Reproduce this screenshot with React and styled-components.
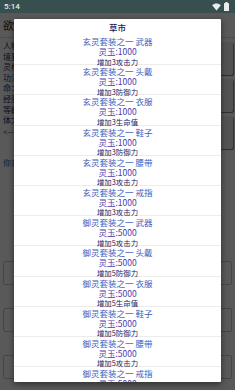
import React from "react";
import styled, { createGlobalStyle } from "styled-components";

const Global = createGlobalStyle`
  html, body { margin: 0; padding: 0; }
  body {
    width: 235px;
    height: 390px;
    overflow: hidden;
    font-family: "Noto Sans CJK SC", "Noto Sans", sans-serif;
    background: #ffffff;
  }
`;

const Page = styled.div`
  position: relative;
  width: 235px;
  height: 390px;
  overflow: hidden;
  display: flex;
  flex-direction: column;
`;

const StatusBar = styled.div`
  height: 13px;
  flex: none;
  background: #37504f;
  display: flex;
  align-items: center;
  justify-content: space-between;
  padding: 0 6px 0 4px;
  color: #e8eded;
  font-family: Roboto, "Noto Sans", sans-serif;
  font-size: 8px;
  font-weight: 500;
  position: relative;
  z-index: 3;
`;

const Icons = styled.div`
  display: flex;
  align-items: center;
  gap: 3px;
`;

const AppBody = styled.div`
  flex: 1;
  display: flex;
  flex-direction: column;
  background: #fff;
`;

const Header = styled.div`
  height: 24px;
  border-bottom: 1px solid #ddd;
  display: flex;
  align-items: center;
  padding-left: 3px;
  font-size: 11px;
  color: #3a1e14;
`;

const Main = styled.div`
  display: flex;
  gap: 4px;
  padding: 3px 2px 0 3px;
`;

const InfoCol = styled.div`
  flex: 1;
  display: flex;
  flex-direction: column;
`;

const InfoLine = styled.div`
  font-size: 8px;
  line-height: 10.6px;
  color: ${(p) => p.$color || "#1c2a6e"};
  margin-top: ${(p) => p.$gap || 0}px;
  white-space: nowrap;
`;

const ButtonCol = styled.div`
  width: 70px;
  display: flex;
  flex-direction: column;
  gap: 4px;
  padding-top: 1px;
`;

const SideButton = styled.div`
  height: ${(p) => p.$h}px;
  background: #eeeeee;
  border-radius: 2px;
  box-shadow: 1px 1px 1px rgba(0, 0, 0, 0.5);
`;

const WideBoxes = styled.div`
  display: flex;
  flex-direction: column;
  gap: 23px;
  padding: 92px 3px 0 3px;
`;

const WideBox = styled.div`
  height: ${(p) => p.$h}px;
  border: 1px solid #c8c8c8;
  border-radius: 2px;
`;

const Overlay = styled.div`
  position: absolute;
  left: 0;
  right: 0;
  top: 13px;
  bottom: 0;
  background: rgba(0, 0, 0, 0.65);
  z-index: 1;
`;

const Dialog = styled.div`
  position: absolute;
  left: 14px;
  top: 19px;
  width: 207px;
  height: 363px;
  background: #fff;
  border-radius: 1px;
  box-shadow: 0 2px 6px rgba(0, 0, 0, 0.5);
  z-index: 2;
  overflow: hidden;
  display: flex;
  flex-direction: column;
`;

const Title = styled.div`
  height: 16px;
  flex: none;
  line-height: 16px;
  text-align: center;
  font-size: 8.5px;
  font-weight: 500;
  color: #23235e;
`;

const List = styled.div`
  flex: 1;
  overflow: hidden;
`;

const Item = styled.div`
  box-sizing: border-box;
  height: 30.2px;
  padding-top: 1px;
  border-bottom: 1px solid #ececec;
  text-align: center;
  display: flex;
  flex-direction: column;
`;

const Name = styled.div`
  font-size: 8.5px;
  line-height: 11px;
  color: #3c5cbc;
`;

const Price = styled.div`
  font-size: 8.5px;
  line-height: 9.5px;
  color: #4c3aaa;
`;

const Effect = styled.div`
  font-size: 7.4px;
  line-height: 9px;
  color: #1e2260;
`;

const parts = [
  ["武器", "攻击力"],
  ["头戴", "防御力"],
  ["衣服", "生命值"],
  ["鞋子", "防御力"],
  ["腰带", "攻击力"],
  ["戒指", "攻击力"],
];

const items = [
  ...parts.map(([p, e]) => ({ name: `玄灵套装之一 ${p}`, price: "灵玉:1000", effect: `增加3${e}` })),
  ...parts.map(([p, e]) => ({ name: `御灵套装之一 ${p}`, price: "灵玉:5000", effect: `增加5${e}` })),
];

const info = ["人物：无名", "境界：炼气一层", "灵根：五行杂灵根", "功法：无", "命：100/100", "经验：0/100", "等级：1", "体力：100"];

function Wifi() {
  return (
    <svg width="9" height="8" viewBox="0 0 24 20">
      <path d="M12 19 L0.5 5 C7 -1 17 -1 23.5 5 Z" fill="#e8eded" />
    </svg>
  );
}

function Battery() {
  return (
    <svg width="5" height="9" viewBox="0 0 10 18">
      <rect x="3" y="0" width="4" height="2" fill="#e8eded" />
      <rect x="0" y="2" width="10" height="16" rx="1" fill="#e8eded" />
    </svg>
  );
}

export default function App() {
  return (
    <Page>
      <Global />
      <StatusBar>
        <span>5:14</span>
        <Icons>
          <Wifi />
          <Battery />
        </Icons>
      </StatusBar>
      <AppBody>
        <Header>欲修仙者，先修心</Header>
        <Main>
          <InfoCol>
            {info.map((t) => (
              <InfoLine key={t}>{t}</InfoLine>
            ))}
            <InfoLine $gap={1}>&lt;------------</InfoLine>
            <InfoLine $gap={21} $color="#2c4fb0">你来到了草市</InfoLine>
          </InfoCol>
          <ButtonCol>
            <SideButton $h={33} />
            <SideButton $h={33} />
            <SideButton $h={33} />
          </ButtonCol>
        </Main>
        <WideBoxes>
          <WideBox $h={22} />
          <WideBox $h={22} />
          <WideBox $h={22} />
        </WideBoxes>
      </AppBody>
      <Overlay />
      <Dialog>
        <Title>草市</Title>
        <List>
          {items.map((it) => (
            <Item key={it.name}>
              <Name>{it.name}</Name>
              <Price>{it.price}</Price>
              <Effect>{it.effect}</Effect>
            </Item>
          ))}
        </List>
      </Dialog>
    </Page>
  );
}
